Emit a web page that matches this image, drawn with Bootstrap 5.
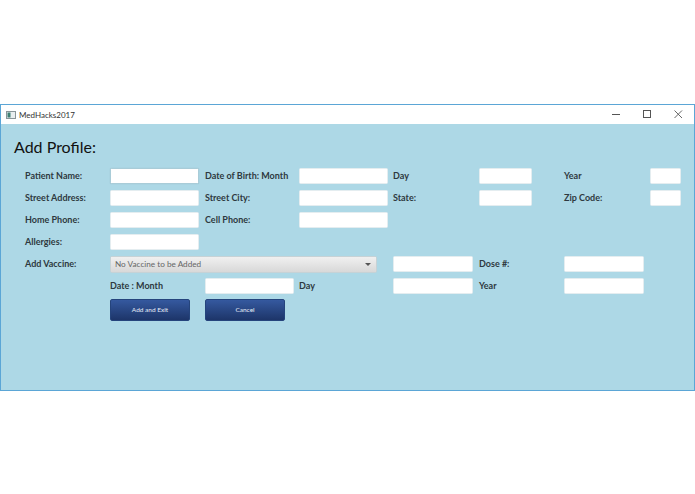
<!DOCTYPE html>
<html lang="en">
<head>
<meta charset="utf-8">
<title>MedHacks2017</title>
<link href="https://cdn.jsdelivr.net/npm/bootstrap@5.3.0/dist/css/bootstrap.min.css" rel="stylesheet">
<style>
html, body { background: #fff; height: 100%; }
body { padding: 104px 0 0; font-family: "Lato", "Noto Sans", sans-serif; }
.app-window { width: 695px; height: 287px; border: 1px solid #5ba6d6; background: #add8e6; }
.app-titlebar { height: 19px; background: #fff; padding-left: 5px; font-size: 8px; color: #333; }
.app-ctl { width: 31px; height: 19px; display: flex; align-items: center; justify-content: center; }
.app-heading { font-size: 16px; line-height: 24px; font-weight: 400; color: #111; margin: 0; padding: 11px 0 0 13px; height: 41px; font-family: "Lato", sans-serif; }
.form-grid { display: grid; grid-template-columns: 85px 95px 94px 94px 86px 85px 86px 31px; grid-auto-rows: 22px; padding-left: 24px; align-items: center; }
.fld-label { font-size: 9px; font-weight: 700; color: #2e3940; white-space: nowrap; line-height: 16px; }
.fld-input { display: block; background: #fff; border: 1px solid #e4edf0; border-radius: 1.5px; height: 16px; padding: 0; }
.w-89 { width: 89px; } .w-53 { width: 53px; } .w-31 { width: 31px; } .w-80 { width: 80px; }
.fld-active { border-color: #a9ccd8; box-shadow: 0 0 1px #8fb7c4; }
.span-3 { grid-column: span 3; }
.col-start-1 { grid-column-start: 1; }
.col-start-2 { grid-column-start: 2; }
.vaccine-combo { width: 267px; height: 17px; border-radius: 1.5px; padding: 0 5px 0 4px; font-size: 8.2px; color: #666; background: linear-gradient(#f0f0f0, #d8d8d8); border: 1px solid #c6d2d6; }
.combo-caret { width: 0; height: 0; border-left: 3px solid transparent; border-right: 3px solid transparent; border-top: 3px solid #555; }
.action-btn { width: 80px; height: 22px; border-radius: 2px; border: 1px solid #25447c; background: linear-gradient(#35599f, #1d3569); color: #e8eef8; font-size: 6.5px; padding: 0; display: flex; align-items: center; justify-content: center; }
</style>
</head>
<body>
<div class="app-window">
  <div class="app-titlebar d-flex align-items-center justify-content-between">
    <div class="d-flex align-items-center" style="gap:3px">
      <svg width="10" height="8" viewBox="0 0 10 8"><rect x=".5" y=".5" width="9" height="7" fill="#e9eef0" stroke="#8a9499"/><rect x="1.5" y="1.5" width="3" height="5" fill="#3f7f73"/></svg>
      <span>MedHacks2017</span>
    </div>
    <div class="d-flex">
      <div class="app-ctl"><svg width="9" height="9" viewBox="0 0 9 9"><path d="M0 4.5H8" stroke="#555" stroke-width="1"/></svg></div>
      <div class="app-ctl"><svg width="9" height="9" viewBox="0 0 9 9"><rect x=".5" y=".5" width="7" height="7" fill="none" stroke="#555"/></svg></div>
      <div class="app-ctl"><svg width="9" height="9" viewBox="0 0 9 9"><path d="M.5 .5L8 8M8 .5L.5 8" stroke="#555" stroke-width=".9"/></svg></div>
    </div>
  </div>
  <h1 class="app-heading">Add Profile:</h1>
  <div class="form-grid">
    <span class="fld-label">Patient Name:</span>
    <input class="fld-input fld-active w-89" type="text" aria-label="Patient Name">
    <span class="fld-label">Date of Birth: Month</span>
    <input class="fld-input w-89" type="text" aria-label="Month">
    <span class="fld-label">Day</span>
    <input class="fld-input w-53" type="text" aria-label="Day">
    <span class="fld-label">Year</span>
    <input class="fld-input w-31" type="text" aria-label="Year">

    <span class="fld-label">Street Address:</span>
    <input class="fld-input w-89" type="text" aria-label="Street Address">
    <span class="fld-label">Street City:</span>
    <input class="fld-input w-89" type="text" aria-label="Street City">
    <span class="fld-label">State:</span>
    <input class="fld-input w-53" type="text" aria-label="State">
    <span class="fld-label">Zip Code:</span>
    <input class="fld-input w-31" type="text" aria-label="Zip Code">

    <span class="fld-label">Home Phone:</span>
    <input class="fld-input w-89" type="text" aria-label="Home Phone">
    <span class="fld-label">Cell Phone:</span>
    <input class="fld-input w-89" type="text" aria-label="Cell Phone">

    <span class="fld-label col-start-1">Allergies:</span>
    <input class="fld-input w-89" type="text" aria-label="Allergies">

    <span class="fld-label col-start-1">Add Vaccine:</span>
    <div class="vaccine-combo span-3 d-flex align-items-center justify-content-between"><span>No Vaccine to be Added</span><span class="combo-caret"></span></div>
    <input class="fld-input w-80" type="text" aria-label="Vaccine">
    <span class="fld-label">Dose #:</span>
    <input class="fld-input w-80" type="text" aria-label="Dose">

    <span class="fld-label col-start-2">Date : Month</span>
    <input class="fld-input w-89" type="text" aria-label="Vaccine Month">
    <span class="fld-label">Day</span>
    <input class="fld-input w-80" type="text" aria-label="Vaccine Day">
    <span class="fld-label">Year</span>
    <input class="fld-input w-80" type="text" aria-label="Vaccine Year">

    <button type="button" class="action-btn col-start-2 mt-1">Add and Exit</button>
    <button type="button" class="action-btn mt-1">Cancel</button>
  </div>
</div>
<script src="https://cdn.jsdelivr.net/npm/bootstrap@5.3.0/dist/js/bootstrap.bundle.min.js"></script>
</body>
</html>
